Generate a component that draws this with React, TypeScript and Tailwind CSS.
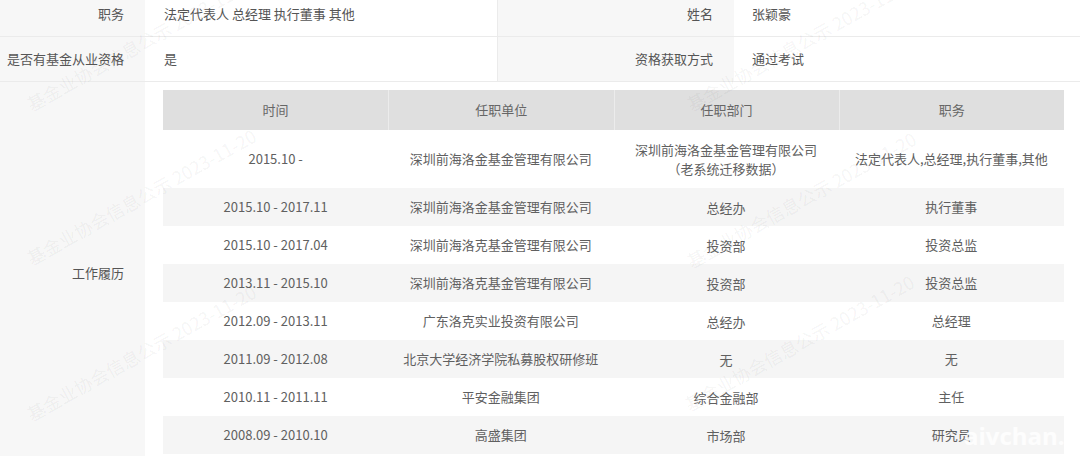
import React from "react";

type Row = { time: string; unit: string; dept: string[]; title: string; tall?: boolean };

const HISTORY: Row[] = [
  { time: "2015.10 -", unit: "深圳前海洛金基金管理有限公司", dept: ["深圳前海洛金基金管理有限公司", "（老系统迁移数据）"], title: "法定代表人,总经理,执行董事,其他", tall: true },
  { time: "2015.10 - 2017.11", unit: "深圳前海洛金基金管理有限公司", dept: ["总经办"], title: "执行董事" },
  { time: "2015.10 - 2017.04", unit: "深圳前海洛克基金管理有限公司", dept: ["投资部"], title: "投资总监" },
  { time: "2013.11 - 2015.10", unit: "深圳前海洛克基金管理有限公司", dept: ["投资部"], title: "投资总监" },
  { time: "2012.09 - 2013.11", unit: "广东洛克实业投资有限公司", dept: ["总经办"], title: "总经理" },
  { time: "2011.09 - 2012.08", unit: "北京大学经济学院私募股权研修班", dept: ["无"], title: "无" },
  { time: "2010.11 - 2011.11", unit: "平安金融集团", dept: ["综合金融部"], title: "主任" },
  { time: "2008.09 - 2010.10", unit: "高盛集团", dept: ["市场部"], title: "研究员" },
];

const WATERMARKS = [
  "left-[28px] top-[96px]",
  "left-[28px] top-[250px]",
  "left-[28px] top-[406px]",
  "left-[688px] top-[96px]",
  "left-[688px] top-[253px]",
  "left-[686px] top-[396px]",
];

function Label({ children, className = "" }: { children: React.ReactNode; className?: string }) {
  return (
    <div className={["flex items-center justify-end bg-[#f7f7f7] text-[#555]", className].join(" ")}>
      {children}
    </div>
  );
}

function InfoRow({ a, av, b, bv }: { a: string; av: string; b: string; bv: string }) {
  return (
    <div className="flex h-[45px] border-b border-[#ebebeb]">
      <Label className="w-[145px] shrink-0 pr-[21px]">{a}</Label>
      <div className="flex w-[352px] items-center pl-[19px] text-[#555]">{av}</div>
      <Label className="w-[237px] shrink-0 border-l border-[#ebebeb] pr-[21px]">{b}</Label>
      <div className="flex flex-1 items-center pl-[18px] text-[#555]">{bv}</div>
    </div>
  );
}

export default function App() {
  return (
    <div
      className="relative h-[456px] w-[1080px] overflow-hidden bg-white text-[13px]"
      style={{ fontFamily: '"Noto Sans CJK SC", "Noto Sans", sans-serif' }}
    >
      <div className="-mt-[8px]">
        <InfoRow a="职务" av="法定代表人 总经理 执行董事 其他" b="姓名" bv="张颖豪" />
        <InfoRow a="是否有基金从业资格" av="是" b="资格获取方式" bv="通过考试" />

        <div className="flex">
          <Label className="w-[145px] shrink-0 pr-[21px]">工作履历</Label>
          <div className="flex-1 pb-[10px] pl-[18px] pr-[16px] pt-[8px] text-[#606060]">
            <div className="grid h-[40px] grid-cols-4 bg-[#dfdfdf] text-[#666]">
              {["时间", "任职单位", "任职部门", "职务"].map((h, i) => (
                <div
                  key={h}
                  className={["flex items-center justify-center", i > 0 ? "border-l border-[#ececec]" : ""].join(" ")}
                >
                  {h}
                </div>
              ))}
            </div>
            {HISTORY.map((r, i) => (
              <div
                key={i}
                className={[
                  "grid grid-cols-4 text-center",
                  r.tall ? "h-[58px]" : "h-[38px]",
                  i % 2 === 1 ? "bg-[#f5f5f5]" : "bg-white",
                ].join(" ")}
              >
                <div className="flex items-center justify-center">{r.time}</div>
                <div className="flex items-center justify-center">{r.unit}</div>
                <div className="flex flex-col items-center justify-center leading-[19px]">
                  {r.dept.map((d) => (
                    <span key={d}>{d}</span>
                  ))}
                </div>
                <div className="flex items-center justify-center whitespace-nowrap">{r.title}</div>
              </div>
            ))}
          </div>
        </div>
      </div>

      {/* watermark overlay */}
      <div className="pointer-events-none absolute inset-0">
        {WATERMARKS.map((pos) => (
          <div
            key={pos}
            className={[
              "absolute origin-left -rotate-[29deg] whitespace-nowrap text-[18px] leading-none text-[rgba(0,0,0,0.055)]",
              pos,
            ].join(" ")}
          >
            基金业协会信息公示 2023-11-20
          </div>
        ))}
        <div
          className="absolute left-[964px] top-[424px] whitespace-nowrap text-[24px] font-bold leading-none text-white/80"
          style={{ fontFamily: '"Open Sans", sans-serif' }}
        >
          aivchan.cn
        </div>
      </div>
    </div>
  );
}
